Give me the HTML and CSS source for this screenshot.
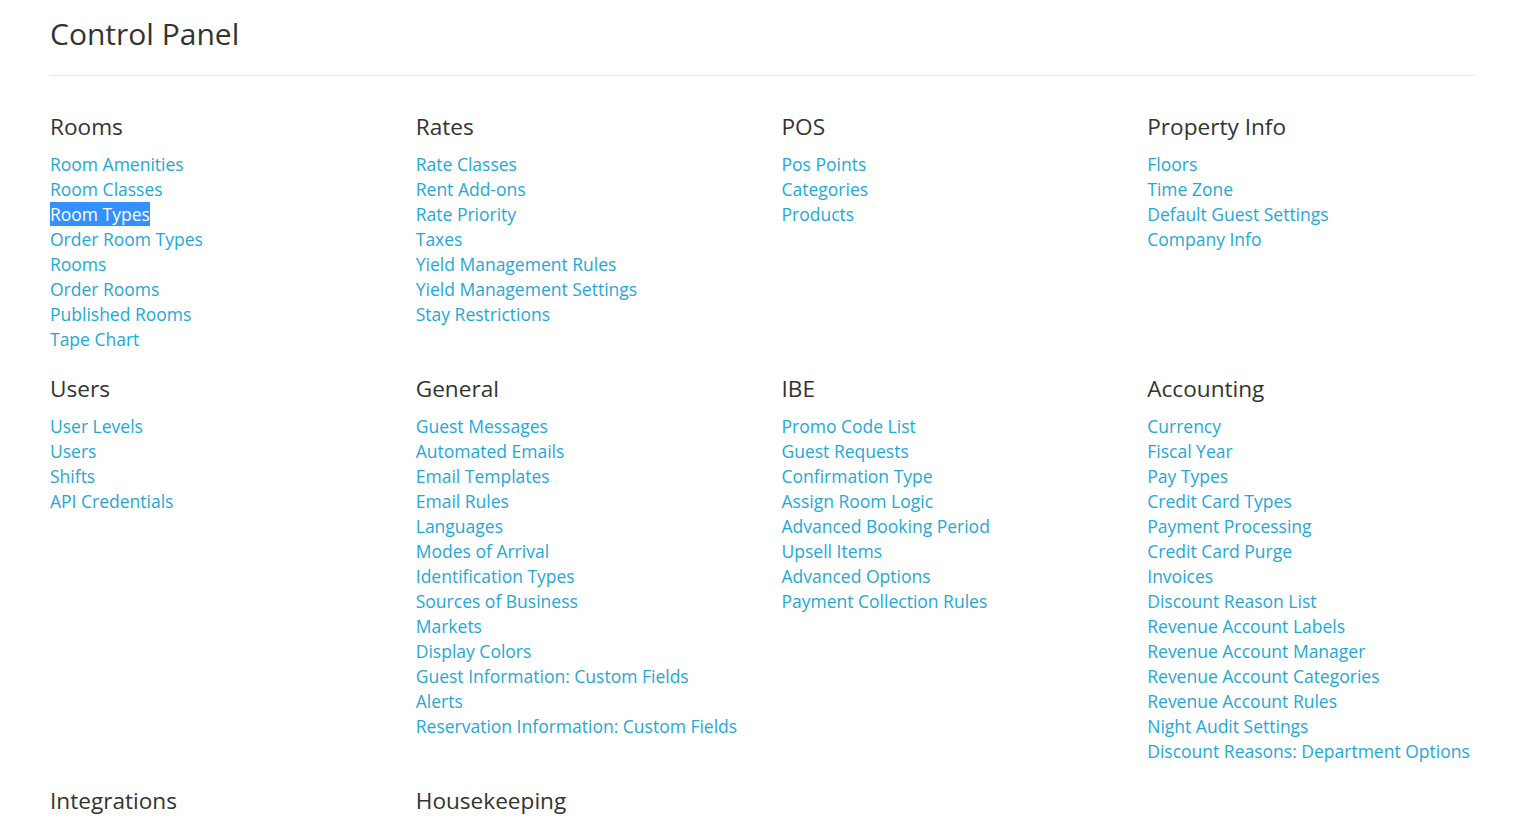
FILE: index.html
```html
<!DOCTYPE html>
<html>
<head>
<meta charset="utf-8">
<title>Control Panel</title>
<link rel="stylesheet" href="styles.css">
</head>
<body>
<div class="page">
  <h1 class="title">Control Panel</h1>
  <hr class="divider">
  <div class="grid">
    <section class="group">
      <h2 class="group-title">Rooms</h2>
      <ul class="links">
        <li><a href="#">Room Amenities</a></li>
        <li><a href="#">Room Classes</a></li>
        <li><a href="#"><span class="selected">Room Types</span></a></li>
        <li><a href="#">Order Room Types</a></li>
        <li><a href="#">Rooms</a></li>
        <li><a href="#">Order Rooms</a></li>
        <li><a href="#">Published Rooms</a></li>
        <li><a href="#">Tape Chart</a></li>
      </ul>
    </section>
    <section class="group">
      <h2 class="group-title">Rates</h2>
      <ul class="links">
        <li><a href="#">Rate Classes</a></li>
        <li><a href="#">Rent Add-ons</a></li>
        <li><a href="#">Rate Priority</a></li>
        <li><a href="#">Taxes</a></li>
        <li><a href="#">Yield Management Rules</a></li>
        <li><a href="#">Yield Management Settings</a></li>
        <li><a href="#">Stay Restrictions</a></li>
      </ul>
    </section>
    <section class="group">
      <h2 class="group-title">POS</h2>
      <ul class="links">
        <li><a href="#">Pos Points</a></li>
        <li><a href="#">Categories</a></li>
        <li><a href="#">Products</a></li>
      </ul>
    </section>
    <section class="group">
      <h2 class="group-title">Property Info</h2>
      <ul class="links">
        <li><a href="#">Floors</a></li>
        <li><a href="#">Time Zone</a></li>
        <li><a href="#">Default Guest Settings</a></li>
        <li><a href="#">Company Info</a></li>
      </ul>
    </section>

    <section class="group">
      <h2 class="group-title">Users</h2>
      <ul class="links">
        <li><a href="#">User Levels</a></li>
        <li><a href="#">Users</a></li>
        <li><a href="#">Shifts</a></li>
        <li><a href="#">API Credentials</a></li>
      </ul>
    </section>
    <section class="group">
      <h2 class="group-title">General</h2>
      <ul class="links">
        <li><a href="#">Guest Messages</a></li>
        <li><a href="#">Automated Emails</a></li>
        <li><a href="#">Email Templates</a></li>
        <li><a href="#">Email Rules</a></li>
        <li><a href="#">Languages</a></li>
        <li><a href="#">Modes of Arrival</a></li>
        <li><a href="#">Identification Types</a></li>
        <li><a href="#">Sources of Business</a></li>
        <li><a href="#">Markets</a></li>
        <li><a href="#">Display Colors</a></li>
        <li><a href="#">Guest Information: Custom Fields</a></li>
        <li><a href="#">Alerts</a></li>
        <li><a href="#">Reservation Information: Custom Fields</a></li>
      </ul>
    </section>
    <section class="group">
      <h2 class="group-title">IBE</h2>
      <ul class="links">
        <li><a href="#">Promo Code List</a></li>
        <li><a href="#">Guest Requests</a></li>
        <li><a href="#">Confirmation Type</a></li>
        <li><a href="#">Assign Room Logic</a></li>
        <li><a href="#">Advanced Booking Period</a></li>
        <li><a href="#">Upsell Items</a></li>
        <li><a href="#">Advanced Options</a></li>
        <li><a href="#">Payment Collection Rules</a></li>
      </ul>
    </section>
    <section class="group">
      <h2 class="group-title">Accounting</h2>
      <ul class="links">
        <li><a href="#">Currency</a></li>
        <li><a href="#">Fiscal Year</a></li>
        <li><a href="#">Pay Types</a></li>
        <li><a href="#">Credit Card Types</a></li>
        <li><a href="#">Payment Processing</a></li>
        <li><a href="#">Credit Card Purge</a></li>
        <li><a href="#">Invoices</a></li>
        <li><a href="#">Discount Reason List</a></li>
        <li><a href="#">Revenue Account Labels</a></li>
        <li><a href="#">Revenue Account Manager</a></li>
        <li><a href="#">Revenue Account Categories</a></li>
        <li><a href="#">Revenue Account Rules</a></li>
        <li><a href="#">Night Audit Settings</a></li>
        <li><a href="#">Discount Reasons: Department Options</a></li>
      </ul>
    </section>

    <section class="group">
      <h2 class="group-title">Integrations</h2>
    </section>
    <section class="group">
      <h2 class="group-title">Housekeeping</h2>
    </section>
  </div>
</div>
</body>
</html>
```

FILE: styles.css
```css
html, body {
  margin: 0;
  padding: 0;
  background: #ffffff;
}
body {
  font-family: "Open Sans", "Liberation Sans", sans-serif;
  color: #333333;
}
.page {
  padding: 17px 59px 0 50px;
}
.title {
  margin: 0;
  font-size: 30px;
  font-weight: 400;
  line-height: 34px;
  color: #333333;
}
.divider {
  margin: 24px 0 0 0;
  border: 0;
  border-top: 1px solid #e8e8e8;
  height: 0;
}
.grid {
  width: 1463px;
  margin-top: 38px;
  display: grid;
  grid-template-columns: repeat(4, 1fr);
  row-gap: 24.5px;
}
.group-title {
  margin: 0 0 12.5px 0;
  font-size: 22.6px;
  font-weight: 400;
  line-height: 25px;
  color: #333333;
}
.links {
  list-style: none;
  margin: 0;
  padding: 0;
}
.links li {
  font-size: 17.5px;
  line-height: 25px;
}
.links a {
  color: #1fa8d8;
  text-decoration: none;
}
.selected {
  background: #3390ff;
  color: #ffffff;
}
```
